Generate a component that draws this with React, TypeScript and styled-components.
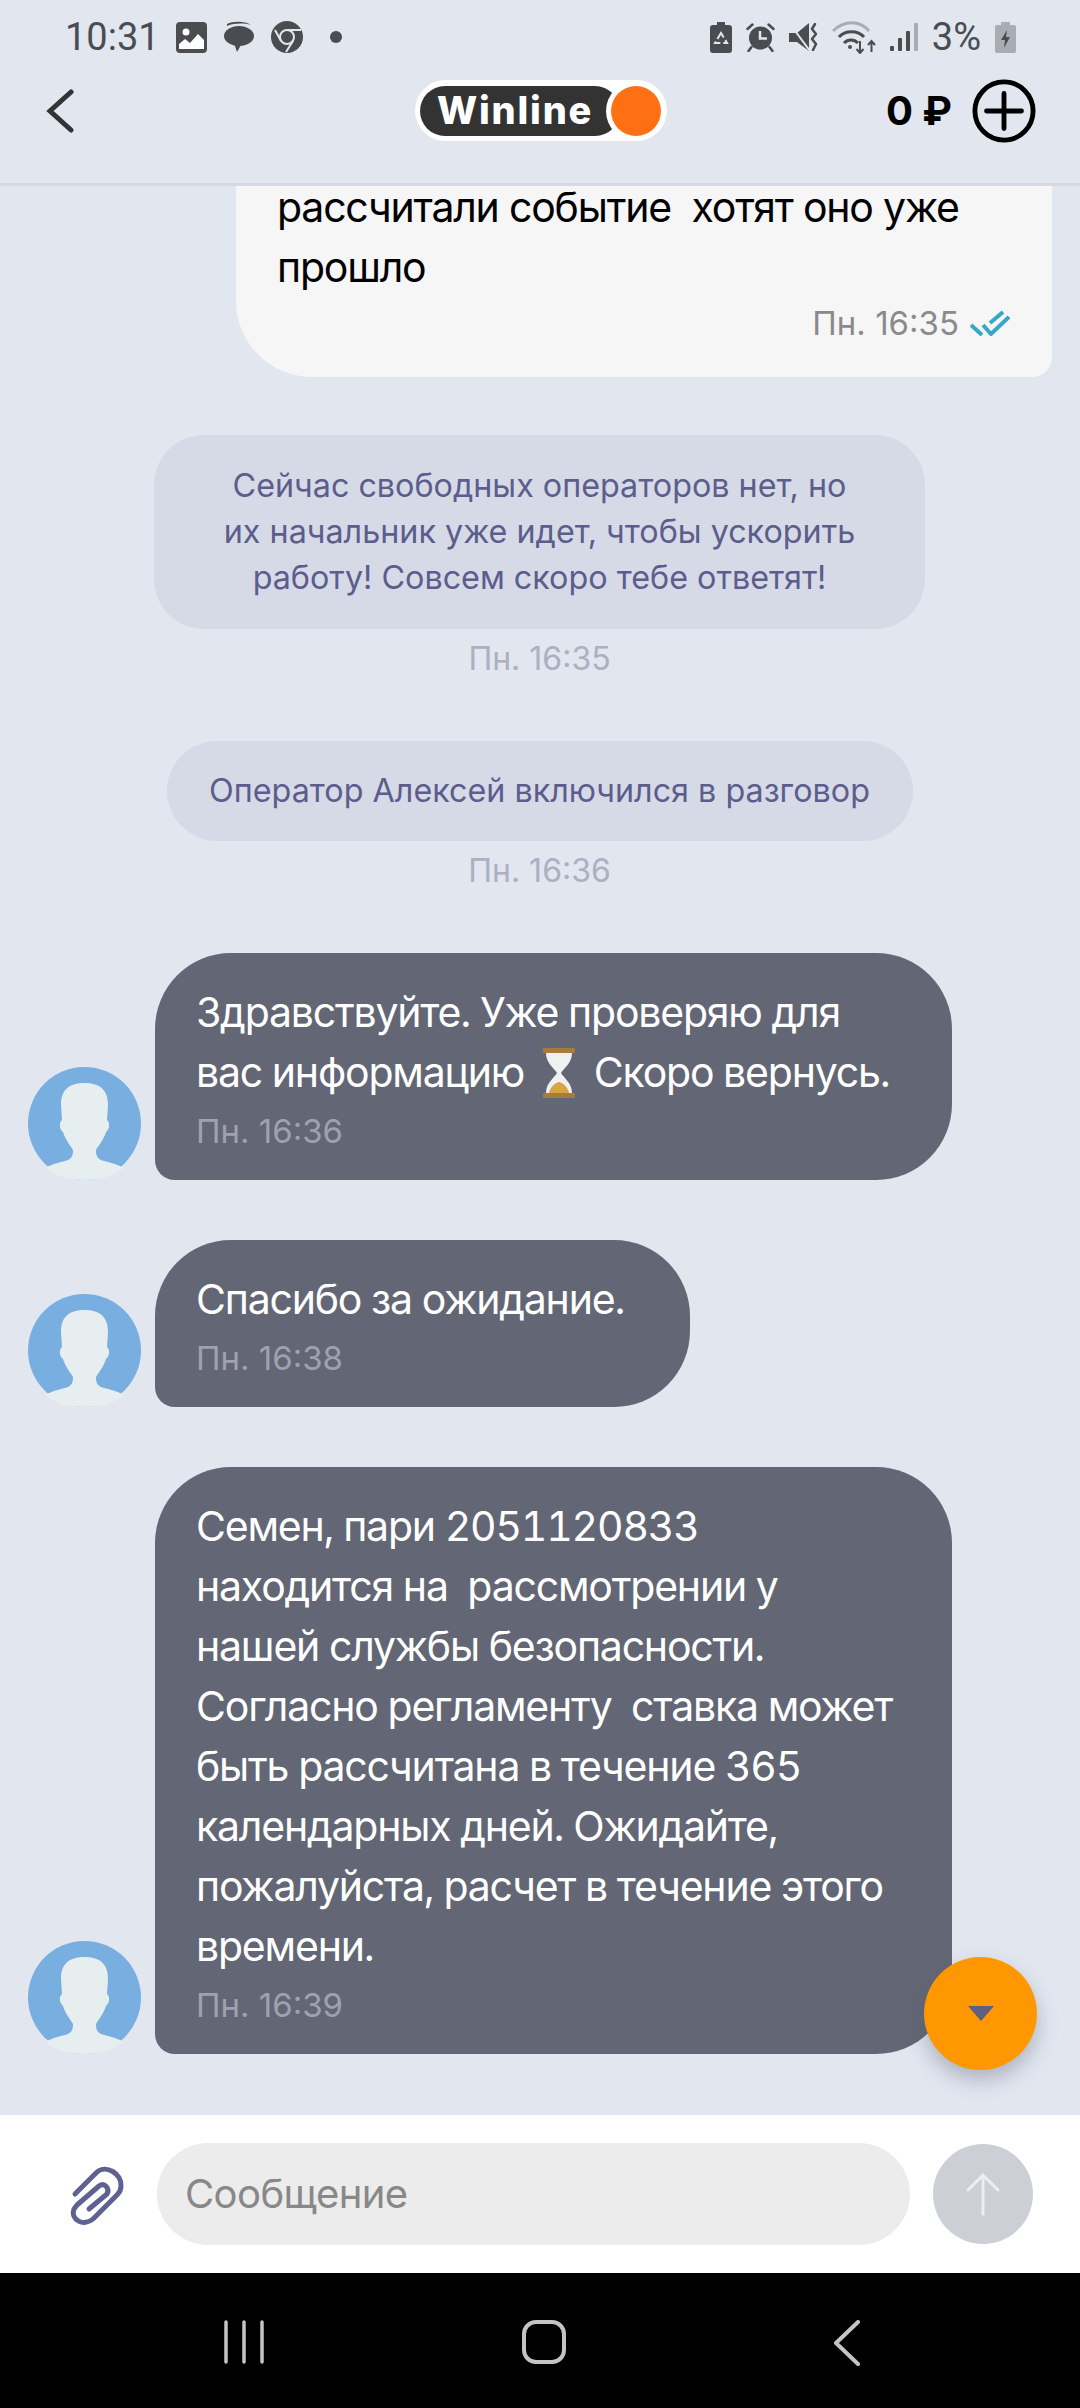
import React from "react";
import styled, { createGlobalStyle } from "styled-components";

const GlobalStyle = createGlobalStyle`
  html, body { margin: 0; padding: 0; background: #e1e6ef; }
  * { box-sizing: border-box; }
`;

const Screen = styled.div`
  width: 1080px;
  height: 2408px;
  display: flex;
  flex-direction: column;
  position: relative;
  overflow: hidden;
  background: #e1e6ef;
  font-family: Inter, "Liberation Sans", sans-serif;
`;

const TopArea = styled.header`
  height: 186px;
  flex: none;
  border-bottom: 3px solid #d5d9e2;
  display: flex;
  flex-direction: column;
  position: relative;
  z-index: 2;
  background: #e1e6ef;
`;

const StatusBar = styled.div`
  height: 72px;
  padding: 2px 64px 0 65px;
  display: flex;
  align-items: center;
  justify-content: space-between;
  color: #4a4c50;
  font-family: Roboto, sans-serif;
  font-size: 38px;
`;

const StatusGroup = styled.div`
  display: flex;
  align-items: center;
  gap: ${(p) => p.$gap}px;
`;

const HeaderRow = styled.div`
  flex: 1;
  display: grid;
  grid-template-columns: 1fr auto 1fr;
  align-items: center;
  padding: 0 44px 34px 46px;
`;

const Logo = styled.div`
  width: 252px;
  height: 61px;
  background: #fff;
  border-radius: 31px;
  padding: 6px 0 5px 5px;
  display: flex;
  align-items: center;
  position: relative;
`;

const LogoName = styled.div`
  width: 200px;
  height: 50px;
  background: #333;
  border-radius: 25px;
  color: #fff;
  font-weight: 800;
  font-size: 38px;
  letter-spacing: 1.8px;
  padding-left: 17px;
  line-height: 49px;
`;

const LogoDot = styled.div`
  position: absolute;
  right: 6px;
  top: 6px;
  width: 50px;
  height: 50px;
  border-radius: 50%;
  background: #ff6f14;
  box-shadow: 0 0 0 5px #fff;
`;

const Balance = styled.div`
  justify-self: end;
  display: flex;
  align-items: center;
  gap: 20px;
  color: #000;
  font-weight: 700;
  font-size: 40px;
`;

const Messages = styled.main`
  flex: 1;
  min-height: 0;
  overflow: hidden;
  display: flex;
  flex-direction: column;
  justify-content: flex-end;
  padding: 0 28px 61px;
`;

const OwnBubble = styled.div`
  flex: none;
  align-self: flex-end;
  width: 816px;
  padding: 60px 42px 31px 41px;
  background: #f6f6f7;
  border-radius: 60px 60px 20px 76px;
  color: #000;
  font-size: 41px;
  line-height: 60px;
  letter-spacing: -1.2px;
  white-space: pre-wrap;
`;

const OwnMeta = styled.div`
  display: flex;
  align-items: center;
  justify-content: flex-end;
  gap: 11px;
  margin-top: 3px;
  margin-right: -0px;
  height: 46px;
  color: #8a8a8a;
  font-size: 33px;
  letter-spacing: 0;
`;

const SystemBlock = styled.div`
  flex: none;
  align-self: center;
  margin-left: ${(p) => p.$shift || 0}px;
  display: flex;
  flex-direction: column;
  align-items: center;
  margin-top: ${(p) => p.$top}px;
`;

const SystemBubble = styled.div`
  width: ${(p) => p.$width}px;
  padding: ${(p) => p.$pad}px 20px;
  background: #d6dae6;
  border-radius: 50px;
  color: #5c5d8c;
  font-size: 32.3px;
  line-height: 46px;
  text-align: center;
  white-space: pre-line;
`;

const SystemTime = styled.div`
  margin-top: 8px;
  color: #abb0c2;
  font-size: 32px;
  line-height: 44px;
`;

const IncomingRow = styled.div`
  flex: none;
  display: flex;
  align-items: flex-end;
  gap: 14px;
  margin-top: ${(p) => p.$top}px;
`;

const IncomingBubble = styled.div`
  width: ${(p) => p.$width}px;
  padding: 29px 30px 27px 41px;
  background: #636674;
  border-radius: 76px 76px 76px 20px;
  color: #fff;
  font-size: 41px;
  line-height: 60px;
  letter-spacing: -1.2px;
  font-variant-numeric: tabular-nums;
  white-space: pre-wrap;
`;

const IncomingTime = styled.div`
  color: #9ea2b0;
  font-size: 33px;
  line-height: 44px;
  letter-spacing: 0;
  font-variant-numeric: normal;
  margin-top: 7px;
`;

const Hourglass = styled.svg`
  width: 38px;
  height: 52px;
  vertical-align: -12px;
  margin: 0 6px;
`;

const ScrollButton = styled.button`
  position: absolute;
  left: 924px;
  top: 1957px;
  width: 113px;
  height: 113px;
  border: none;
  border-radius: 50%;
  background: #ff9800;
  box-shadow: 0 10px 20px rgba(80, 85, 110, 0.35);
  display: flex;
  align-items: center;
  justify-content: center;
  padding: 0;
`;

const Composer = styled.footer`
  height: 158px;
  flex: none;
  background: #fff;
  display: flex;
  align-items: center;
  padding: 0 47px 0 60px;
  gap: 23px;
`;

const ClipIcon = styled.svg`
  flex: none;
  margin-right: -6px;
`;

const MessageInput = styled.div`
  flex: 1;
  height: 102px;
  background: #ececec;
  border-radius: 51px;
  color: #888;
  font-size: 40px;
  line-height: 102px;
  padding-left: 28px;
  letter-spacing: -0.6px;
`;

const SendButton = styled.div`
  width: 100px;
  height: 100px;
  border-radius: 50%;
  background: #cdcfd6;
  display: flex;
  align-items: center;
  justify-content: center;
`;

const NavBar = styled.nav`
  height: 135px;
  flex: none;
  background: #000;
  display: flex;
  align-items: flex-start;
  justify-content: space-between;
  padding: 47px 219px 0 224px;
`;

const HomeIcon = styled.svg`
  margin-right: 9px;
`;

const Avatar = () => (
  <svg width="113" height="113" viewBox="0 0 113 113" style={{ flex: "none" }}>
    <circle cx="56.5" cy="56.5" r="56.5" fill="#78aee0" />
    <path
      d="M56.5 16C42 16 33 22 33 38L34 53C31 55 31 62 35 65C37 72 42 78 45 83C45 88 44 91 40 93C34 95 26 96 17 101C28 110 42 113 56.5 113C71 113 85 110 96 101C87 96 79 95 73 93C69 91 68 88 68 83C71 78 76 72 78 65C82 62 82 55 79 53L80 38C80 22 71 16 56.5 16Z"
      fill="#e6eef0"
    />
  </svg>
);

const DoubleTick = () => (
  <svg width="40" height="26" viewBox="21 12 40 26" fill="none" stroke="#35a8c8" strokeWidth="4">
    <path d="M22 27l11 10" />
    <path d="M34 27l8 9 18-17" />
    <path d="M41 25l13-11" />
  </svg>
);

const PictureIcon = () => (
  <svg width="31" height="31" viewBox="0 0 31 31">
    <rect width="31" height="31" rx="4" fill="#4a4c50" />
    <circle cx="10" cy="10" r="3.500" fill="#fff" />
    <path d="M3 27v-5l6-5 5 4 8-9 6 6v9z" fill="#fff" />
  </svg>
);

const ChatIcon = () => (
  <svg width="32" height="32" viewBox="0 0 32 32" fill="#4a4c50">
    <path d="M4 3c6-3 18-3 24 1-7-2-17-2-24 1z" />
    <ellipse cx="16" cy="15" rx="15" ry="10" />
    <path d="M11 22l7 2-4 7z" />
  </svg>
);

const ChromeIcon = () => (
  <svg width="32" height="32" viewBox="0 0 32 32">
    <circle cx="16" cy="16" r="16" fill="#4a4c50" />
    <circle cx="16" cy="16" r="7" fill="none" stroke="#e1e6ef" strokeWidth="2" />
    <path d="M16 9h14M10 20L4 9M22 20l-7 11" stroke="#e1e6ef" strokeWidth="2" />
  </svg>
);

const BatterySaverIcon = () => (
  <svg width="22" height="31" viewBox="0 0 22 31">
    <path d="M7 0h8v3h4a3 3 0 0 1 3 3v22a3 3 0 0 1-3 3H3a3 3 0 0 1-3-3V6a3 3 0 0 1 3-3h4z" fill="#4a4c50" />
    <path d="M11 11l-6 10h12z" fill="none" stroke="#e1e6ef" strokeWidth="2" strokeDasharray="7 3" />
  </svg>
);

const AlarmIcon = () => (
  <svg width="29" height="29" viewBox="0 0 29 29">
    <circle cx="14.500" cy="15" r="11.500" fill="#4a4c50" />
    <path d="M1.500 6l5-4.500M27.500 6l-5-4.500M5.500 24l-3 4M23.500 24l3 4" stroke="#4a4c50" strokeWidth="2.500" strokeLinecap="round" />
    <path d="M14 8v7.500h7" fill="none" stroke="#e1e6ef" strokeWidth="2.500" />
  </svg>
);

const MuteIcon = () => (
  <svg width="29" height="28" viewBox="0 0 29 28" fill="none">
    <path d="M0 10h8L20 0v28L8 19H0z" fill="#4a4c50" />
    <path d="M1 1l20 27" stroke="#e1e6ef" strokeWidth="2" />
    <path d="M26 1l-3 5 4 5-4 5 4 5-3 6" stroke="#4a4c50" strokeWidth="2.500" strokeLinecap="round" strokeLinejoin="round" />
  </svg>
);

const WifiIcon = () => (
  <svg width="44" height="33" viewBox="0 0 44 33" fill="none">
    <path d="M1 10C12-1 28-1 37 10" stroke="#a9acb2" strokeWidth="3" />
    <path d="M7 16C13 9 26 9 32 16M12 22C16 18 22 18 26 22" stroke="#4a4c50" strokeWidth="3" />
    <circle cx="18" cy="26" r="2" fill="#4a4c50" />
    <path d="M28 20v12m-3.500-4l3.500 4 3.500-4M39.500 31V20m-3.500 4l3.500-4 3.500 4" stroke="#4a4c50" strokeWidth="2" />
  </svg>
);

const SignalIcon = () => (
  <svg width="28" height="28" viewBox="0 0 28 28">
    <rect x="0" y="23" width="4" height="5" rx="1" fill="#4a4c50" />
    <rect x="8" y="15" width="4" height="13" rx="1" fill="#4a4c50" />
    <rect x="16" y="8" width="4" height="20" rx="1" fill="#4a4c50" />
    <rect x="24" y="0" width="4" height="28" rx="1" fill="#a9acb2" />
  </svg>
);

const BatteryIcon = () => (
  <svg width="21" height="31" viewBox="0 0 21 31">
    <path d="M6 0h9v3h4a2 2 0 0 1 2 2v24a2 2 0 0 1-2 2H2a2 2 0 0 1-2-2V5a2 2 0 0 1 2-2h4z" fill="#a9acb2" />
    <path d="M12 8l-6 10h4l-1 8 6-11h-4z" fill="#4a4c50" />
  </svg>
);

const StatusDot = styled.span`
  width: 12px;
  height: 12px;
  border-radius: 50%;
  background: #4a4c50;
  margin-left: 11px;
`;

const incoming = [
  { top: 60, width: 797, time: "Пн. 16:36", hourglass: true, text: "" },
  { top: 60, width: 535, time: "Пн. 16:38", text: "Спасибо за ожидание." },
  {
    top: 60,
    width: 797,
    time: "Пн. 16:39",
    text:
      "Семен, пари 2051120833\nнаходится на  рассмотрении у\nнашей службы безопасности.\nСогласно регламенту  ставка может\nбыть рассчитана в течение 365\nкалендарных дней. Ожидайте,\nпожалуйста, расчет в течение этого\nвремени.",
  },
];

const App: React.FC = () => {
  return (
    <Screen>
      <GlobalStyle />
      <TopArea>
        <StatusBar>
          <StatusGroup $gap={16}>
            <span>10:31</span>
            <PictureIcon />
            <ChatIcon />
            <ChromeIcon />
            <StatusDot />
          </StatusGroup>
          <StatusGroup $gap={14}>
            <BatterySaverIcon />
            <AlarmIcon />
            <MuteIcon />
            <WifiIcon />
            <SignalIcon />
            <span>3%</span>
            <BatteryIcon />
          </StatusGroup>
        </StatusBar>
        <HeaderRow>
          <svg width="28" height="44" viewBox="0 0 28 44" fill="none" stroke="#333" strokeWidth="5" strokeLinecap="round">
            <path d="M25 3L4 22l21 19" />
          </svg>
          <Logo>
            <LogoName>Winline</LogoName>
            <LogoDot />
          </Logo>
          <Balance>
            <span>0 ₽</span>
            <svg width="64" height="64" viewBox="0 0 66 66" fill="none" stroke="#000" strokeWidth="5">
              <circle cx="33" cy="33" r="30" />
              <path d="M33 15v36M15 33h36" strokeLinecap="round" />
            </svg>
          </Balance>
        </HeaderRow>
      </TopArea>

      <Messages>
        <OwnBubble>
          {"рассчитали событие  хотят оно уже\nпрошло"}
          <OwnMeta>
            <span>Пн. 16:35</span>
            <DoubleTick />
          </OwnMeta>
        </OwnBubble>

        <SystemBlock $top={58} $shift={-1}>
          <SystemBubble $width={771} $pad={28}>
            {"Сейчас свободных операторов нет, но\nих начальник уже идет, чтобы ускорить\nработу! Совсем скоро тебе ответят!"}
          </SystemBubble>
          <SystemTime>Пн. 16:35</SystemTime>
        </SystemBlock>

        <SystemBlock $top={60} $shift={-1}>
          <SystemBubble $width={746} $pad={27}>
            Оператор Алексей включился в разговор
          </SystemBubble>
          <SystemTime>Пн. 16:36</SystemTime>
        </SystemBlock>

        {incoming.map((m) => (
          <IncomingRow key={m.time} $top={m.top}>
            <Avatar />
            <IncomingBubble $width={m.width}>
              {m.hourglass ? (
                <>
                  {"Здравствуйте. Уже проверяю для\nвас информацию "}
                  <Hourglass viewBox="0 0 38 52">
                    <rect x="3" y="1" width="32" height="5" rx="1" fill="#a67c3d" />
                    <rect x="3" y="46" width="32" height="5" rx="1" fill="#a67c3d" />
                    <path d="M6 6h26c0 10-8 15-11 20 3 5 11 10 11 20H6c0-10 8-15 11-20C14 21 6 16 6 6z" fill="#eef0f2" />
                    <path d="M9 46c1-6 6-10 10-11 4 1 9 5 10 11z" fill="#d8a545" />
                  </Hourglass>
                  {" Скоро вернусь."}
                </>
              ) : (
                m.text
              )}
              <IncomingTime>{m.time}</IncomingTime>
            </IncomingBubble>
          </IncomingRow>
        ))}
      </Messages>

      <ScrollButton aria-label="Вниз">
        <svg width="26" height="15" viewBox="0 0 26 15">
          <path d="M0 0h26L13 15z" fill="#5f5f80" />
        </svg>
      </ScrollButton>

      <Composer>
        <ClipIcon width="80" height="80" viewBox="0 0 80 80" fill="none" stroke="#5f6191" strokeWidth="5" strokeLinecap="round" strokeLinejoin="round">
          <path d="M15 40L37 18C46 10 62 20 61 32C61 36 59 39 57 41L33 65C24 73 10 66 14 55L17 51L39 32C45 28 50 35 47 40L29 55" />
        </ClipIcon>
        <MessageInput>Сообщение</MessageInput>
        <SendButton>
          <svg width="36" height="44" viewBox="0 0 36 44" fill="none" stroke="#eceef0" strokeWidth="3" strokeLinecap="round">
            <path d="M18 42V3M3 18L18 3l15 15" />
          </svg>
        </SendButton>
      </Composer>

      <NavBar>
        <svg width="40" height="44" viewBox="0 0 40 44" stroke="#c4c4c4" strokeWidth="3.500" strokeLinecap="round">
          <path d="M2 2v40M20 2v40M38 2v40" />
        </svg>
        <HomeIcon width="44" height="44" viewBox="0 0 44 44" fill="none" stroke="#c4c4c4" strokeWidth="4">
          <rect x="2" y="2" width="40" height="40" rx="12" />
        </HomeIcon>
        <svg width="28" height="46" viewBox="0 0 28 46" fill="none" stroke="#c4c4c4" strokeWidth="4" strokeLinecap="round" strokeLinejoin="round">
          <path d="M25 2L3 23l22 21" />
        </svg>
      </NavBar>
    </Screen>
  );
};

export default App;
